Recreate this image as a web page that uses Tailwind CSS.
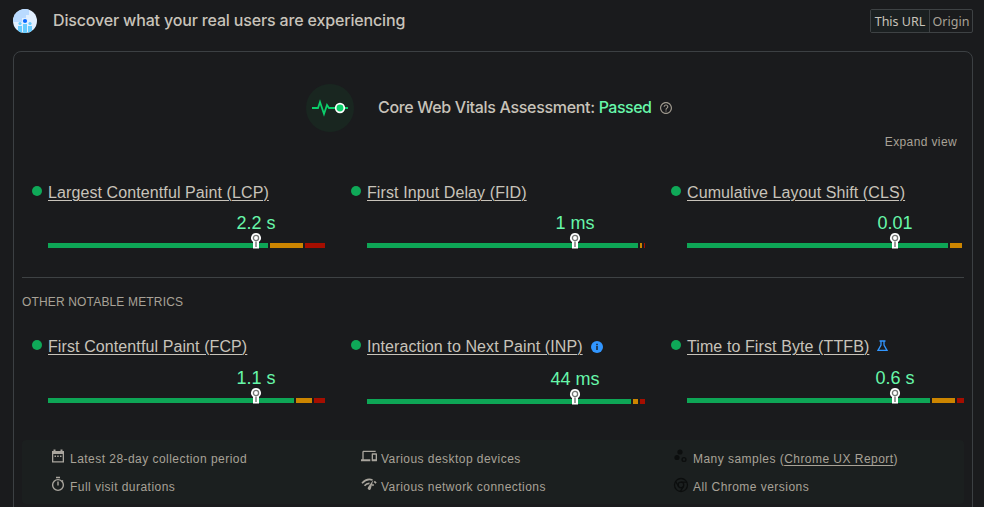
<!DOCTYPE html>
<html lang="en">
<head>
<meta charset="utf-8">
<title>Core Web Vitals</title>
<script src="https://cdn.jsdelivr.net/npm/@tailwindcss/browser@4"></script>
</head>
<body class="bg-[#1a1b1d] w-[984px] h-[507px] overflow-hidden font-['Liberation_Sans',Arial,sans-serif] text-[#c8c3ba]">
<svg width="0" height="0" class="absolute">
  <symbol id="pin" viewBox="0 0 12 17"><path d="M6 1a5 5 0 0 0-3 9v6.500h6V10a5 5 0 0 0-3-9z" fill="#fff"/><circle cx="6" cy="6" r="2.600" fill="#fff" stroke="#747775" stroke-width="1.300"/><path d="M5 9.500h2V15H5z" fill="#9a9d9b"/></symbol>
</svg>
<header class="flex h-[51px] pl-[13px] pr-[11px]">
  <svg class="mt-[9px] size-6" viewBox="0 0 24 24"><defs><clipPath id="c"><circle cx="12" cy="12" r="12"/></clipPath></defs><g clip-path="url(#c)"><path fill="#e1efff" d="M0 0h24v24H0z"/><path fill="#b9daff" d="M0 0h16v6h-3v3h-4v4H0z"/><g fill="#66cbff"><circle cx="7" cy="14.500" r="1.600"/><circle cx="17" cy="14.500" r="1.600"/><path d="M5 17h4v7H5zM10 15h4v9h-4zM15 17h4v7h-4z"/></g><circle cx="12" cy="12" r="2.100" fill="#086bff"/></g></svg>
  <h1 class="ml-4 mt-[8px] h-6 leading-6 whitespace-nowrap text-[16px] font-medium font-['Inter',sans-serif] tracking-[-0.16px]">Discover what your real users are experiencing</h1>
  <div class="ml-auto mt-[9px] flex h-6 w-[103px] rounded-[2px] border border-[#3e4244] font-['Noto_Sans',sans-serif] text-[12.5px] leading-[23px] whitespace-nowrap">
    <div class="w-[59px] border-r border-[#3e4244] bg-[#1b2021] text-center">This URL</div>
    <div class="flex-1 text-center text-[#a8a297]">Origin</div>
  </div>
</header>
<main class="ml-[13px] flex h-[480px] w-[960px] flex-col rounded-[8px] border border-[#3c4043] px-2">
  <div class="flex h-[83px] items-start pl-[284px] pt-8">
    <svg class="size-12" viewBox="0 0 48 48"><circle cx="24" cy="24" r="24" fill="#192620"/><path d="M6 24h6l2-6 4 12 3-9 2 3h19" fill="none" stroke="#0cce6b" stroke-width="1.800"/><circle cx="34" cy="24" r="4.300" fill="#0cce6b" stroke="#fff" stroke-width="1.700"/></svg>
    <h2 class="ml-6 mt-[11px] h-6 leading-6 whitespace-nowrap text-[16px] font-medium font-['Inter',sans-serif] tracking-[-0.32px]">Core Web Vitals Assessment: <span class="text-[#67f7aa] tracking-[-0.5px]">Passed</span></h2>
    <svg class="ml-[9px] mt-[18px] size-3" viewBox="2 2 20 20" fill="#9d978c"><path d="M11 18h2v-2h-2v2zm1-16C6.480 2 2 6.480 2 12s4.480 10 10 10 10-4.480 10-10S17.520 2 12 2zm0 18c-4.410 0-8-3.590-8-8s3.590-8 8-8 8 3.590 8 8-3.590 8-8 8zm0-14c-2.210 0-4 1.790-4 4h2c0-1.100.9-2 2-2s2 .9 2 2c0 2-3 1.750-3 5h2c0-2.250 3-2.500 3-5 0-2.210-1.790-4-4-4z"/></svg>
  </div>
  <div class="h-[47px] pr-[7px] text-right text-[12px] leading-[14px] tracking-[0.38px] text-[#a8a297]">Expand view</div>

  <section class="grid h-[96px] grid-cols-[319px_320px_294px] border-b border-[#3e4244] pl-[10px] text-[16px] leading-[22px] tracking-[0.1px]">
    <div class="pl-4">
      <div class="-ml-4 flex h-5"><i class="mr-1.5 mt-[4px] size-[10px] rounded-full bg-[#0fa958]"></i><span class="underline decoration-1 underline-offset-2">Largest Contentful Paint (LCP)</span></div>
      <div class="relative mt-[10px] h-[31px] w-[277px]"><b class="absolute left-[208px] w-24 -translate-x-1/2 text-center text-[18px] font-normal leading-[22px] tracking-normal text-[#67f7aa]">2.2 s</b><svg class="absolute left-[202px] top-[20px] z-10 h-[17px] w-3"><use href="#pin"/></svg></div>
      <div class="flex h-[5px] gap-[2px]"><i class="w-[220px] bg-[#0ea656]"></i><i class="w-[33px] bg-[#cc8500]"></i><i class="w-5 bg-[#a50e00]"></i></div>
    </div>
    <div class="pl-4">
      <div class="-ml-4 flex h-5"><i class="mr-1.5 mt-[4px] size-[10px] rounded-full bg-[#0fa958]"></i><span class="underline decoration-1 underline-offset-2">First Input Delay (FID)</span></div>
      <div class="relative mt-[10px] h-[31px] w-[277px]"><b class="absolute left-[208px] w-24 -translate-x-1/2 text-center text-[18px] font-normal leading-[22px] tracking-normal text-[#67f7aa]">1 ms</b><svg class="absolute left-[202px] top-[20px] z-10 h-[17px] w-3"><use href="#pin"/></svg></div>
      <div class="flex h-[5px] gap-[2px]"><i class="w-[271px] bg-[#0ea656]"></i><i class="w-[2px] bg-[#cc8500]"></i><i class="w-px bg-[#a50e00]"></i></div>
    </div>
    <div class="pl-4">
      <div class="-ml-4 flex h-5"><i class="mr-1.5 mt-[4px] size-[10px] rounded-full bg-[#0fa958]"></i><span class="underline decoration-1 underline-offset-2">Cumulative Layout Shift (CLS)</span></div>
      <div class="relative mt-[10px] h-[31px] w-[277px]"><b class="absolute left-[208px] w-24 -translate-x-1/2 text-center text-[18px] font-normal leading-[22px] tracking-normal text-[#67f7aa]">0.01</b><svg class="absolute left-[202px] top-[20px] z-10 h-[17px] w-3"><use href="#pin"/></svg></div>
      <div class="flex h-[5px] gap-[2px]"><i class="w-[261px] bg-[#0ea656]"></i><i class="w-3 bg-[#cc8500]"></i></div>
    </div>
  </section>

  <h3 class="h-[58px] pt-4 text-[12px] leading-4 tracking-[0.160px] text-[#a8a297]">OTHER NOTABLE METRICS</h3>

  <section class="grid h-[104px] grid-cols-[319px_320px_294px] pl-[10px] text-[16px] leading-[22px] tracking-[0.1px]">
    <div class="pl-4">
      <div class="-ml-4 flex h-5"><i class="mr-1.5 mt-[4px] size-[10px] rounded-full bg-[#0fa958]"></i><span class="underline decoration-1 underline-offset-2">First Contentful Paint (FCP)</span></div>
      <div class="relative mt-[11px] h-[31px] w-[277px]"><b class="absolute left-[208px] w-24 -translate-x-1/2 text-center text-[18px] font-normal leading-[22px] tracking-normal text-[#67f7aa]">1.1 s</b><svg class="absolute left-[202px] top-[20px] z-10 h-[17px] w-3"><use href="#pin"/></svg></div>
      <div class="flex h-[5px] gap-[2px]"><i class="w-[246px] bg-[#0ea656]"></i><i class="w-4 bg-[#cc8500]"></i><i class="w-[11px] bg-[#a50e00]"></i></div>
    </div>
    <div class="pl-4">
      <div class="-ml-4 flex h-5"><i class="mr-1.5 mt-[4px] size-[10px] rounded-full bg-[#0fa958]"></i><span class="underline decoration-1 underline-offset-2">Interaction to Next Paint (INP)</span><svg class="ml-2 mt-[5px] size-3" viewBox="0 0 12 12"><circle cx="6" cy="6" r="6" fill="#3196ff"/><path d="M5.300 2.800h1.400v1.400H5.300zM5.300 5h1.400v4H5.300z" fill="#1a1b1d"/></svg></div>
      <div class="relative mt-[12px] h-[31px] w-[277px]"><b class="absolute left-[208px] w-24 -translate-x-1/2 text-center text-[18px] font-normal leading-[22px] tracking-normal text-[#67f7aa]">44 ms</b><svg class="absolute left-[202px] top-[20px] z-10 h-[17px] w-3"><use href="#pin"/></svg></div>
      <div class="flex h-[5px] gap-[2px]"><i class="w-[264px] bg-[#0ea656]"></i><i class="w-[5px] bg-[#cc8500]"></i><i class="w-[5px] bg-[#a50e00]"></i></div>
    </div>
    <div class="pl-4">
      <div class="-ml-4 flex h-5"><i class="mr-1.5 mt-[4px] size-[10px] rounded-full bg-[#0fa958]"></i><span class="underline decoration-1 underline-offset-2">Time to First Byte (TTFB)</span><svg class="ml-2 mt-1 h-3 w-[11px]" viewBox="0 0 11 12" fill="none" stroke="#3196ff" stroke-width="1.300"><path d="M2.500 1h6M4 1v4L1 10.400h9L7 5V1"/></svg></div>
      <div class="relative mt-[11px] h-[31px] w-[277px]"><b class="absolute left-[208px] w-24 -translate-x-1/2 text-center text-[18px] font-normal leading-[22px] tracking-normal text-[#67f7aa]">0.6 s</b><svg class="absolute left-[202px] top-[20px] z-10 h-[17px] w-3"><use href="#pin"/></svg></div>
      <div class="flex h-[5px] gap-[2px]"><i class="w-[243px] bg-[#0ea656]"></i><i class="w-[23px] bg-[#cc8500]"></i><i class="w-[7px] bg-[#a50e00]"></i></div>
    </div>
  </section>

  <footer class="grid h-16 w-[942px] grid-cols-[311px_312px_1fr] grid-rows-[28px_28px] rounded-[4px] bg-[#1b1f1f] pl-7 pt-[5px] text-[12px] leading-7 tracking-[0.460px] whitespace-nowrap text-[#a8a297]">
    <div class="flex"><svg class="mr-1 mt-[3px] size-4" viewBox="0 0 16 16" fill="#a9a59d"><path d="M3.500 1.500h2V3h5V1.500h2V3H14v11.500H2V3h1.500zM3.300 6v7.200h9.400V6z" fill-rule="evenodd"/><path d="M4.500 7.500H6V9H4.500zM7.200 7.500h1.500V9H7.200zM10 7.500h1.500V9H10z"/></svg>Latest 28-day collection period</div>
    <div class="flex"><svg class="mr-1 mt-[3px] size-4" viewBox="0 0 24 24" fill="#a9a59d"><path d="M4 6h18V4H4c-1.100 0-2 .9-2 2v11H0v3h14v-3H4V6zm19 2h-6c-.55 0-1 .45-1 1v10c0 .55.45 1 1 1h6c.55 0 1-.45 1-1V9c0-.55-.45-1-1-1zm-1 9h-4v-7h4v7z"/></svg>Various desktop devices</div>
    <div class="flex"><svg class="mr-1 mt-[3px] size-4" viewBox="0 0 16 16" fill="#0c0e0e"><circle cx="7" cy="4" r="2.600"/><circle cx="4" cy="9.500" r="2.600"/><circle cx="11" cy="11.500" r="1.900" fill="none" stroke="#0c0e0e" stroke-width="1.400"/></svg>Many samples (<span class="underline decoration-1 underline-offset-2">Chrome UX Report</span>)</div>
    <div class="flex"><svg class="mr-1 mt-[3px] size-4" viewBox="0 0 16 16" fill="none" stroke="#a9a59d" stroke-width="1.400"><circle cx="8" cy="9" r="5.400"/><path d="M6 1.500h4M8 5.500v4M12 4.500l1 1"/></svg>Full visit durations</div>
    <div class="flex"><svg class="mr-1 mt-[3px] size-4" viewBox="0 0 16 16" fill="none" stroke="#a9a59d" stroke-width="1.700"><path d="M1 7.200C4.500 3.300 8.500 2.700 11.500 4M3.500 9.800C5 8 6.800 7.300 8.500 7.400M13.200 5.300l1.900 1.900M11.300 8.300l1.300 1.400"/><path d="M12.300 3.800L9.900 12.500a1.600 1.600 0 1 1-2.900-1.200z" fill="#a9a59d" stroke="none"/></svg>Various network connections</div>
    <div class="flex"><svg class="mr-1 mt-[4px] size-4" viewBox="0 0 16 16" fill="none" stroke="#0c0e0e" stroke-width="1.300"><circle cx="8" cy="8" r="6.500"/><circle cx="8" cy="8" r="2.800"/><path d="M8 5.200h6M10.400 9.400l-3 5M5.600 9.400l-3-5"/></svg>All Chrome versions</div>
  </footer>
</main>
</body>
</html>
